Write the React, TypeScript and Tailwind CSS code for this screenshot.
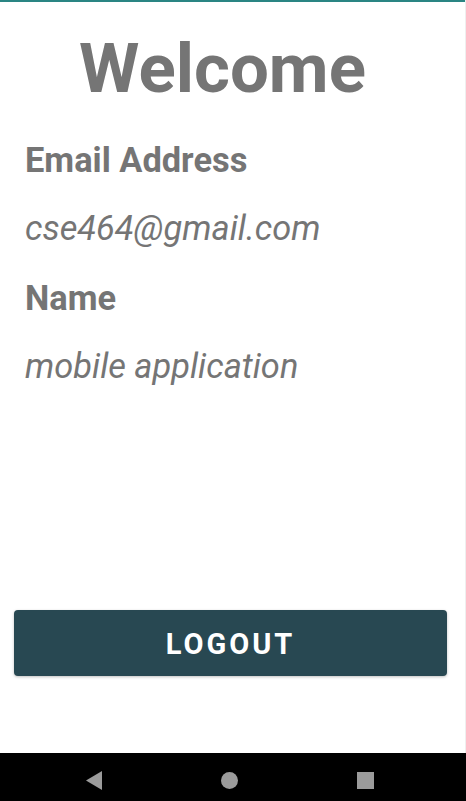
export default function App() {
  return (
    <div className="flex h-[801px] w-[466px] flex-col bg-white font-['Roboto',sans-serif] text-[#757575]">
      <div className="flex flex-1 flex-col border-r border-[#efefef]">
        <div className="h-[2px] bg-[#2a8583]" />
        <h1 className="mt-[27px] pr-[20px] text-center text-[69px] font-bold leading-[80px]">
          Welcome
        </h1>
        <div className="flex flex-col px-[25px]">
          <div className="mt-[31px] text-[34.4px] font-bold leading-[40px]">Email Address</div>
          <div className="mt-[28px] text-[34.4px] italic leading-[40px]">cse464@gmail.com</div>
          <div className="mt-[30px] text-[34.4px] font-bold leading-[40px]">Name</div>
          <div className="mt-[28px] text-[34.4px] italic leading-[40px]">mobile application</div>
        </div>
        <div className="flex-1" />
        <button className="mb-[77px] ml-[14px] mr-[18px] h-[66px] rounded-[4px] bg-[#284852] pt-[4px] text-[29px] font-bold tracking-[3px] text-white shadow-[0_1px_3px_rgba(0,0,0,0.25)]">
          LOGOUT
        </button>
      </div>
      <div className="flex h-[48px] items-center gap-[119px] bg-black pt-[6px]">
        <svg className="ml-[86px]" width="16" height="19" viewBox="0 0 16 19">
          <polygon points="16,0 16,19 0,9.5" fill="#9b9b9b" />
        </svg>
        <div className="h-[17px] w-[17px] rounded-full bg-[#9b9b9b]" />
        <div className="h-[17px] w-[17px] bg-[#9b9b9b]" />
      </div>
    </div>
  );
}
